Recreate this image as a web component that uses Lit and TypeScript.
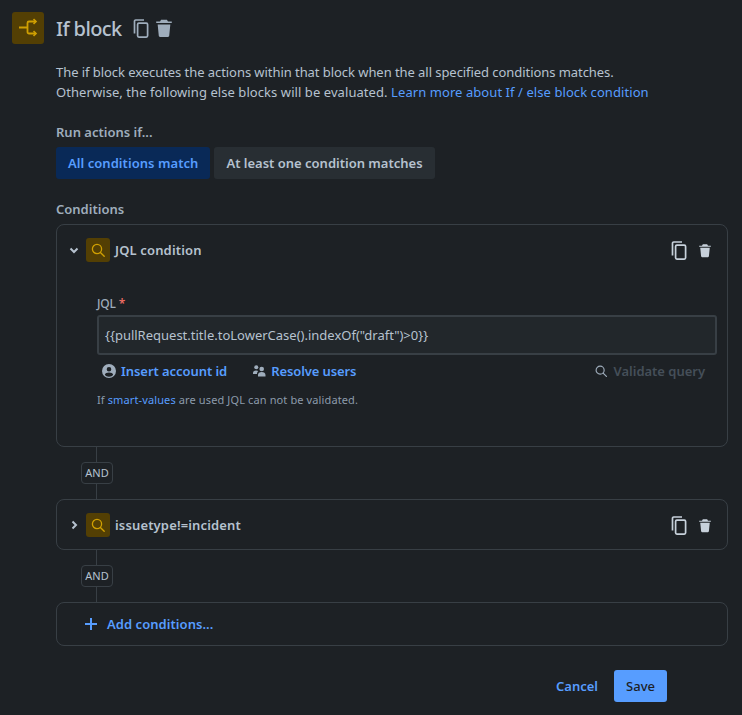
import { LitElement, html, css, svg } from "lit";
import { customElement } from "lit/decorators.js";

const copyIcon = svg`<path d="M2.500 14.500V2.200c0-.7.500-1.200 1.200-1.200H12" fill="none" stroke="currentColor" stroke-width="1.700"/><rect x="5.600" y="4.100" width="10" height="14" rx="1.300" fill="none" stroke="currentColor" stroke-width="1.700"/>`;
const trashIcon = svg`<path d="M1 3.200h3.400L5.400 1.600h5.200l1 1.600H15v1.400H1z M2.300 5.800h11.400l-1 10.200c-.1.600-.5 1-1.100 1H4.400c-.6 0-1-.4-1.100-1z" fill="currentColor"/>`;
const search = svg`<circle cx="7" cy="7" r="4.600" fill="none" stroke="currentColor" stroke-width="1.300"/><path d="M10.400 10.400l3.800 3.800" stroke="currentColor" stroke-width="1.400" stroke-linecap="round"/>`;

@customElement("app-root")
export class AppRoot extends LitElement {
  static styles = css`
    :host { display: block; width: 742px; height: 715px; overflow: hidden; background: #1d2125; color: #b6c2cf;
      font-family: "Noto Sans", "Open Sans", sans-serif; font-size: 13px; line-height: 20px; }
    * { box-sizing: border-box; }
    svg { display: block; flex: none; }
    a { color: #579dff; text-decoration: none; }
    .page { padding: 12px 14px 0 12px; display: flex; flex-direction: column; }
    .head { display: flex; align-items: center; height: 32px; }
    .logo { width: 32px; height: 32px; border-radius: 3px; background: #533f04; color: #cf9f02; display: flex; align-items: center; justify-content: center; }
    .title { margin: 2px 0 0 12px; font-size: 20px; font-weight: 500; line-height: 30px; color: #b6c2cf; letter-spacing: -0.6px; }
    .head-copy { margin-left: 10px; color: #9fadbc; }
    .head-trash { margin-left: 6px; color: #9fadbc; }
    .body { margin-left: 44px; display: flex; flex-direction: column; }
    .desc { margin-top: 18px; }
    .l1 { letter-spacing: -0.06px; }
    .l2 { letter-spacing: 0.07px; }
    .label { font-weight: 600; font-size: 13px; line-height: 20px; color: #9fadbc; }
    .run { margin-top: 20px; }
    .seg { display: flex; gap: 4px; margin-top: 5px; }
    .seg button { border: 0; height: 32px; padding: 0 12px; border-radius: 3px; font: 600 13px/20px "Noto Sans", sans-serif; background: #282e33; color: #b6c2cf; }
    .seg button.on { background: #092957; color: #579dff; letter-spacing: 0.05px; }
    .cond-label { margin-top: 20px; }
    .card { border: 1px solid #383f45; border-radius: 8px; }
    .card.first { margin-top: 5px; height: 223px; }
    .card.second { height: 51px; }
    .row { display: flex; align-items: center; height: 50px; padding: 0 15px 0 11px; }
    .chev { width: 12px; height: 12px; color: #b6c2cf; }
    .cicon { margin-left: 6px; width: 24px; height: 24px; border-radius: 3px; background: #533f04; color: #cf9f02; display: flex; align-items: center; justify-content: center; }
    .cname { margin-left: 5px; font-weight: 600; font-size: 13px; color: #b6c2cf; letter-spacing: 0.15px; flex: 1; }
    .tools { display: flex; align-items: center; gap: 11px; color: #c7d1db; }
    .form { margin: 19px 10px 0 40px; display: flex; flex-direction: column; }
    .jql { font-size: 12px; line-height: 20px; font-weight: 500; color: #9fadbc; letter-spacing: -0.2px; }
    .jql b { color: #f87168; font-weight: 500; }
    .input { margin-top: 1px; height: 40px; border: 2px solid #383f45; border-radius: 3px; background: #22272b; padding: 0 6px; display: flex; align-items: center; font-size: 13px; color: #b6c2cf; }
    .acts { display: flex; align-items: center; margin-top: 6px; height: 20px; font-weight: 600; font-size: 13px; }
    .act { display: flex; align-items: center; color: #579dff; margin-left: 5px; letter-spacing: -0.06px; }
    .act svg { margin-right: 5px; color: #9fadbc; }
    .act.second { margin-left: 25px; letter-spacing: -0.1px; }
    .validate { margin-left: auto; margin-right: 12px; display: flex; align-items: center; gap: 6px; color: #454f59; letter-spacing: -0.02px; }
    .validate svg { color: #9fadbc; }
    .help { margin-top: 10px; font-size: 11px; line-height: 18px; color: #8c9bab; letter-spacing: 0.12px; }
    .help span { color: #579dff; }
    .link { display: flex; flex-direction: column; align-items: center; width: 32px; height: 52px; margin-left: 25px; }
    .link i { width: 1px; flex: 1; background: #383f45; margin-right: 2px; }
    .and { width: 32px; height: 22px; border: 1px solid #383f45; border-radius: 4px; font-size: 11px; line-height: 20px; text-align: center; color: #b6c2cf; }
    .add { height: 44px; border: 1px solid #383f45; border-radius: 8px; display: flex; align-items: center; padding-left: 27px; color: #579dff; font-weight: 600; font-size: 13px; gap: 9px; letter-spacing: 0.05px; }
    .foot { display: flex; justify-content: flex-end; align-items: center; gap: 16px; margin: 24px 61px 0 0; font-weight: 600; font-size: 13px; }
    .save { width: 53px; height: 32px; border-radius: 3px; background: #579dff; color: #1d2125; display: flex; align-items: center; justify-content: center; font-weight: 500; }
  `;

  private tools() {
    return html`<div class="tools">
      <svg width="17" height="19" viewBox="0 0 17 19">${copyIcon}</svg>
      <svg width="14" height="15" viewBox="0 0 16 18">${trashIcon}</svg>
    </div>`;
  }

  private cicon() {
    return html`<span class="cicon"><svg width="16" height="16" viewBox="0 0 16 16">${search}</svg></span>`;
  }

  private and() {
    return html`<div class="link"><i></i><div class="and">AND</div><i></i></div>`;
  }

  render() {
    return html`<div class="page">
      <div class="head">
        <div class="logo"><svg width="20" height="20" viewBox="0 0 20 20" fill="none" stroke="currentColor" stroke-width="1.800"><path d="M1 9.500H9.500M18 3.500H11a1.500 1.500 0 00-1.500 1.500V14a1.500 1.500 0 001.500 1.500H18"/><path d="M15.500 1.200L18 3.500l-2.500 2.300M15.500 13.200L18 15.500l-2.500 2.300" stroke-width="1.600"/></svg></div>
        <div class="title">If block</div>
        <svg class="head-copy" width="17" height="19" viewBox="0 0 17 19">${copyIcon}</svg>
        <svg class="head-trash" width="18" height="20" viewBox="0 0 16 18">${trashIcon}</svg>
      </div>
      <div class="body">
        <div class="desc"><span class="l1">The if block executes the actions within that block when the all specified conditions matches.</span><br><span class="l2">Otherwise, the following else blocks will be evaluated. <a>Learn more about If / else block condition</a></span></div>
        <div class="label run">Run actions if...</div>
        <div class="seg"><button class="on">All conditions match</button><button>At least one condition matches</button></div>
        <div class="label cond-label">Conditions</div>
        <div class="card first">
          <div class="row">
            <svg class="chev" viewBox="0 0 12 12" fill="none" stroke="currentColor" stroke-width="2"><path d="M2.500 4.500L6 8l3.500-3.500"/></svg>
            ${this.cicon()}
            <span class="cname">JQL condition</span>
            ${this.tools()}
          </div>
          <div class="form">
            <div class="jql">JQL <b>*</b></div>
            <div class="input">{{pullRequest.title.toLowerCase().indexOf("draft")>0}}</div>
            <div class="acts">
              <span class="act"><svg width="14" height="14" viewBox="0 0 14 14"><path fill="currentColor" fill-rule="evenodd" d="M7 0a7 7 0 110 14A7 7 0 017 0zm0 3a2.300 2.300 0 100 4.600A2.300 2.300 0 007 3zM2.800 10.800C3.500 12 5.200 12.800 7 12.800s3.500-.8 4.200-2c-.4-1.300-2-2.200-4.200-2.200s-3.800.9-4.200 2.200z"/></svg>Insert account id</span>
              <span class="act second"><svg width="14" height="14" viewBox="0 0 14 14"><g fill="currentColor"><circle cx="4.300" cy="3.200" r="2"/><circle cx="9.700" cy="5" r="2.300"/><path d="M1 9c0-1.500 1-2.600 3-2.600 1 0 1.700.2 2.200.7C5.300 7.900 5 9 5 10H1z"/><path d="M6 12.500V11c0-1.900 1.500-3 3.700-3s3.800 1.100 3.800 3v1.500z"/></g></svg>Resolve users</span>
              <span class="validate"><svg width="14" height="14" viewBox="0 0 16 16">${search}</svg>Validate query</span>
            </div>
            <div class="help">If <span>smart-values</span> are used JQL can not be validated.</div>
          </div>
        </div>
        ${this.and()}
        <div class="card second">
          <div class="row">
            <svg class="chev" viewBox="0 0 12 12" fill="none" stroke="currentColor" stroke-width="2"><path d="M4.500 2.500L8 6l-3.500 3.500"/></svg>
            ${this.cicon()}
            <span class="cname">issuetype!=incident</span>
            ${this.tools()}
          </div>
        </div>
        ${this.and()}
        <div class="add"><svg width="14" height="14" viewBox="0 0 14 14"><path d="M7 1v12M1 7h12" stroke="currentColor" stroke-width="2"/></svg>Add conditions...</div>
        <div class="foot"><a>Cancel</a><span class="save">Save</span></div>
      </div>
    </div>`;
  }
}
